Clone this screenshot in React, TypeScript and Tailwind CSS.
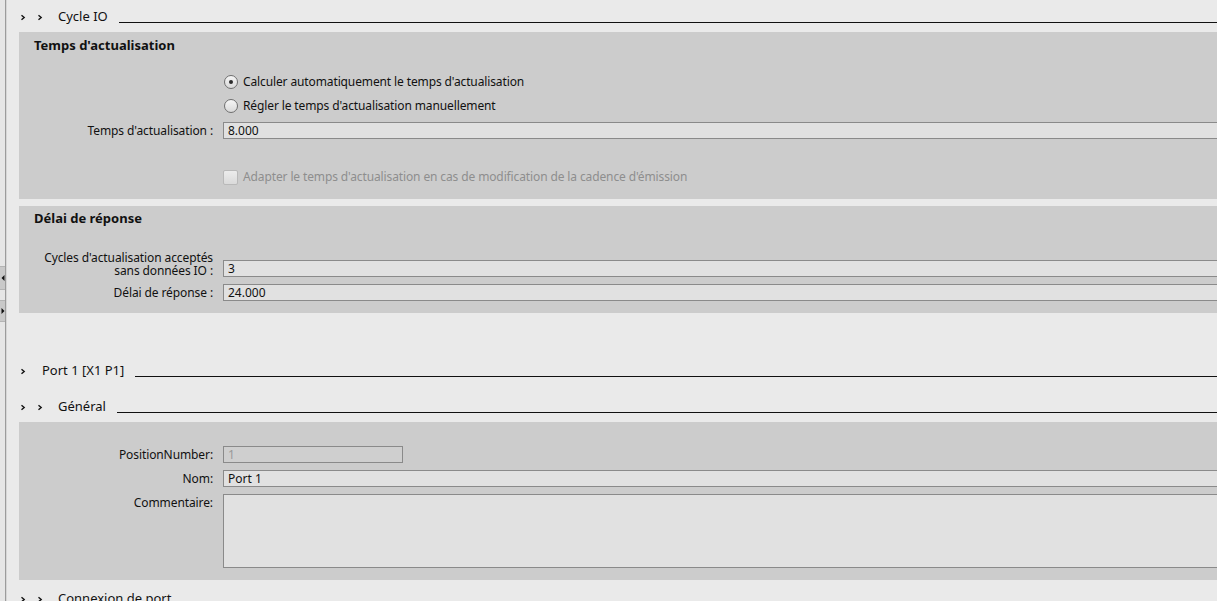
import type { ReactNode } from 'react';

const font = { fontFamily: '"Noto Sans", "Open Sans", sans-serif' };

function Chevron() {
  return (
    <svg width="6" height="7" viewBox="0 0 6 7" className="shrink-0">
      <path d="M1.5 1.2 L4.2 3.5 L1.5 5.8" fill="none" stroke="#111" strokeWidth="1.4" />
    </svg>
  );
}

function SectionHeader({ title, depth, className }: { title: string; depth: 1 | 2; className: string }) {
  return (
    <div className={`flex h-[20px] items-center ${className}`}>
      <div className="ml-[13px] flex items-center">
        <Chevron />
        {depth === 2 && (
          <span className="ml-[11px]">
            <Chevron />
          </span>
        )}
      </div>
      <span className={`${depth === 2 ? 'ml-[15px]' : 'ml-[16px]'} text-[13px] text-[#111] whitespace-nowrap`}>
        {title}
      </span>
      <div className="ml-[11px] mb-[4px] h-px flex-1 self-end bg-[#111]" />
    </div>
  );
}

function Radio({ checked }: { checked?: boolean }) {
  return (
    <div className="flex h-[14px] w-[14px] shrink-0 items-center justify-center rounded-full border border-[#6f6f6f] bg-gradient-to-b from-[#f6f6f6] to-[#d9d9d9]">
      {checked && <div className="h-[4px] w-[4px] rounded-full bg-[#2b2b2b]" />}
    </div>
  );
}

function Field({ label, children, className = '' }: { label: ReactNode; children: ReactNode; className?: string }) {
  return (
    <div className={`flex ${className}`}>
      <div className="w-[194px] shrink-0 text-right text-[12px] leading-[17px] tracking-[-0.1px] text-[#111]">{label}</div>
      <div className="ml-[10px] flex-1">{children}</div>
    </div>
  );
}

function Input({ value, disabled }: { value: string; disabled?: boolean }) {
  return (
    <div
      className={`flex h-[17px] items-center border border-[#8a8a8a] pl-[4px] text-[12px] leading-[15px] ${
        disabled ? 'w-[180px] bg-[#cfcfcf] text-[#9a9a9a]' : 'w-full bg-[#e1e1e1] text-[#111]'
      }`}
    >
      {value}
    </div>
  );
}

function Panel({ children, className }: { children: ReactNode; className: string }) {
  return <div className={`bg-[#cccccc] ${className}`}>{children}</div>;
}

export default function App() {
  return (
    <div className="flex h-[601px] w-[1217px] overflow-hidden bg-[#eaeaea]" style={font}>
      {/* left splitter */}
      <div className="flex w-[5px] shrink-0 flex-col bg-[#e6e6e6]">
        <div className="mt-[266px] flex h-[24px] items-center justify-center border-y border-[#b4b4b4] bg-[#c9c9c9]">
          <svg width="4" height="6" viewBox="0 0 4 6">
            <path d="M3.5 0 L0.5 3 L3.5 6 Z" fill="#111" />
          </svg>
        </div>
        <div className="mt-[10px] flex h-[22px] items-center justify-center border-y border-[#b4b4b4] bg-[#c9c9c9]">
          <svg width="4" height="6" viewBox="0 0 4 6">
            <path d="M0.5 0 L3.5 3 L0.5 6 Z" fill="#111" />
          </svg>
        </div>
      </div>
      <div className="w-px shrink-0 bg-[#9c9c9c]" />
      <div className="w-px shrink-0 bg-[#d6d6d6]" />

      <div className="w-[1240px] shrink-0">
        <SectionHeader title="Cycle IO" depth={2} className="mt-[7px]" />

        <Panel className="ml-[12px] mt-[5px] pb-[14px] pt-[5px]">
          <div className="ml-[15px] h-[16px] text-[13px] font-bold leading-[16px] text-[#111]">
            Temps d'actualisation
          </div>
          <div className="ml-[205px] mt-[21px] flex h-[16px] items-center gap-[5px] text-[12px] tracking-[-0.12px] text-[#111]">
            <Radio checked />
            <span>Calculer automatiquement le temps d'actualisation</span>
          </div>
          <div className="ml-[205px] mt-[8px] flex h-[16px] items-center gap-[5px] text-[12px] tracking-[-0.12px] text-[#111]">
            <Radio />
            <span>Régler le temps d'actualisation manuellement</span>
          </div>
          <Field label="Temps d'actualisation :" className="mt-[8px]">
            <Input value="8.000" />
          </Field>
          <div className="ml-[204px] mt-[30px] flex h-[16px] items-center gap-[5px] text-[12px] tracking-[-0.12px] text-[#8e8e8e]">
            <div className="h-[15px] w-[15px] shrink-0 rounded-[2px] border border-[#b9b9b9] bg-gradient-to-b from-[#ececec] to-[#dadada]" />
            <span>Adapter le temps d'actualisation en cas de modification de la cadence d'émission</span>
          </div>
        </Panel>

        <Panel className="ml-[12px] mt-[7px] pb-[12px] pt-[4px]">
          <div className="ml-[15px] h-[16px] text-[13px] font-bold leading-[16px] text-[#111]">
            Délai de réponse
          </div>
          <Field
            className="mt-[25px] items-end"
            label={
              <div className="leading-[13px]">
                Cycles d'actualisation acceptés
                <br />
                sans données IO :
              </div>
            }
          >
            <Input value="3" />
          </Field>
          <Field label="Délai de réponse :" className="mt-[7px]">
            <Input value="24.000" />
          </Field>
        </Panel>

        <SectionHeader title="Port 1 [X1 P1]" depth={1} className="mt-[48px]" />
        <SectionHeader title="Général" depth={2} className="mt-[16px]" />

        <Panel className="ml-[12px] mt-[5px] pb-[12px]">
          <Field label="PositionNumber:" className="pt-[24px]">
            <Input value="1" disabled />
          </Field>
          <Field label="Nom:" className="mt-[7px]">
            <Input value="Port 1" />
          </Field>
          <Field label="Commentaire:" className="mt-[7px]">
            <div className="h-[74px] w-full border border-[#8a8a8a] bg-[#e1e1e1]" />
          </Field>
        </Panel>

        <SectionHeader title="Connexion de port" depth={2} className="mt-[9px]" />
      </div>
    </div>
  );
}
